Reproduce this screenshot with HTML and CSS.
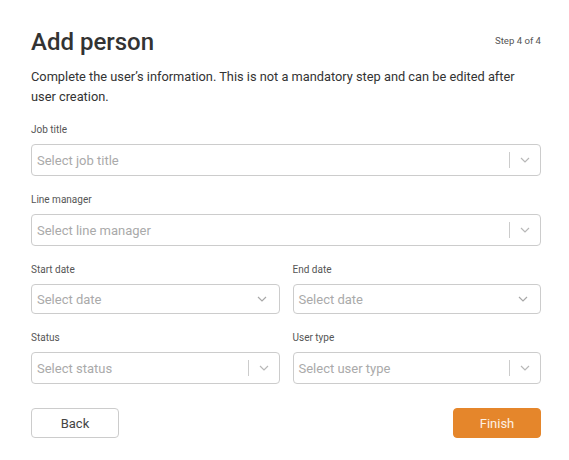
FILE: index.html
```html
<!DOCTYPE html>
<html lang="en">
<head>
<meta charset="utf-8">
<title>Add person</title>
<link rel="stylesheet" href="styles.css">
</head>
<body>
<div class="page">
  <div class="header">
    <h1 class="title">Add person</h1>
    <span class="step">Step 4 of 4</span>
  </div>
  <p class="intro">Complete the user’s information. This is not a mandatory step and can be edited after user creation.</p>

  <div class="field">
    <div class="label">Job title</div>
    <div class="select">
      <span class="placeholder">Select job title</span>
      <span class="sep"></span>
      <span class="chev"><svg width="10" height="6" viewBox="0 0 10 6"><path d="M1 1l4 4 4-4" fill="none" stroke="#b8b8b8" stroke-width="1.2"/></svg></span>
    </div>
  </div>

  <div class="field">
    <div class="label">Line manager</div>
    <div class="select">
      <span class="placeholder">Select line manager</span>
      <span class="sep"></span>
      <span class="chev"><svg width="10" height="6" viewBox="0 0 10 6"><path d="M1 1l4 4 4-4" fill="none" stroke="#b8b8b8" stroke-width="1.2"/></svg></span>
    </div>
  </div>

  <div class="row">
    <div class="field">
      <div class="label">Start date</div>
      <div class="select date">
        <span class="placeholder">Select date</span>
        <span class="chev"><svg width="10" height="6" viewBox="0 0 10 6"><path d="M1 1l4 4 4-4" fill="none" stroke="#a8a8a8" stroke-width="1.2"/></svg></span>
      </div>
    </div>
    <div class="field">
      <div class="label">End date</div>
      <div class="select date">
        <span class="placeholder">Select date</span>
        <span class="chev"><svg width="10" height="6" viewBox="0 0 10 6"><path d="M1 1l4 4 4-4" fill="none" stroke="#a8a8a8" stroke-width="1.2"/></svg></span>
      </div>
    </div>
  </div>

  <div class="row">
    <div class="field">
      <div class="label">Status</div>
      <div class="select">
        <span class="placeholder">Select status</span>
        <span class="sep"></span>
        <span class="chev"><svg width="10" height="6" viewBox="0 0 10 6"><path d="M1 1l4 4 4-4" fill="none" stroke="#b8b8b8" stroke-width="1.2"/></svg></span>
      </div>
    </div>
    <div class="field">
      <div class="label">User type</div>
      <div class="select">
        <span class="placeholder">Select user type</span>
        <span class="sep"></span>
        <span class="chev"><svg width="10" height="6" viewBox="0 0 10 6"><path d="M1 1l4 4 4-4" fill="none" stroke="#b8b8b8" stroke-width="1.2"/></svg></span>
      </div>
    </div>
  </div>

  <div class="actions">
    <button class="btn back">Back</button>
    <button class="btn finish">Finish</button>
  </div>
</div>
</body>
</html>
```

FILE: styles.css
```css
* { box-sizing: border-box; }
html, body { margin: 0; padding: 0; background: #fff; }
body { font-family: Roboto, "Noto Sans", "Liberation Sans", sans-serif; color: #333; }
.page { padding: 27px 28px 0 31px; width: 569px; }
.header { display: flex; justify-content: space-between; align-items: flex-start; }
.title { margin: 0; font-size: 24px; line-height: 30px; font-weight: 500; color: #333; }
.step { font-size: 9.6px; color: #555; line-height: 14px; margin-top: 7px; }
.intro { margin: 10px 0 16px; font-size: 12.8px; line-height: 20px; color: #333; }
.field { margin-bottom: 17px; }
.label { font-size: 10px; line-height: 14px; color: #555; margin-bottom: 7px; }
.select { display: flex; align-items: center; height: 32px; border: 1px solid #ccc; border-radius: 4px; padding-left: 5px; }
.select.date { height: 30px; }
.placeholder { flex: 1; font-size: 13px; color: #aaa; white-space: nowrap; }
.sep { width: 1px; height: 16px; background: #ccc; }
.chev { width: 30px; display: flex; justify-content: center; align-items: center; }
.date .chev { width: 34px; }
.row { display: grid; grid-template-columns: 1fr 1fr; column-gap: 13px; }
.actions { display: flex; justify-content: space-between; margin-top: 7px; }
.btn { width: 88px; height: 30px; border-radius: 4px; font-family: Roboto, "Noto Sans", "Liberation Sans", sans-serif; font-size: 13px; cursor: pointer; }
.back { background: #fff; border: 1px solid #ccc; color: #444; }
.finish { background: #e5862b; border: 1px solid #e5862b; color: #fdf0e4; }
```
